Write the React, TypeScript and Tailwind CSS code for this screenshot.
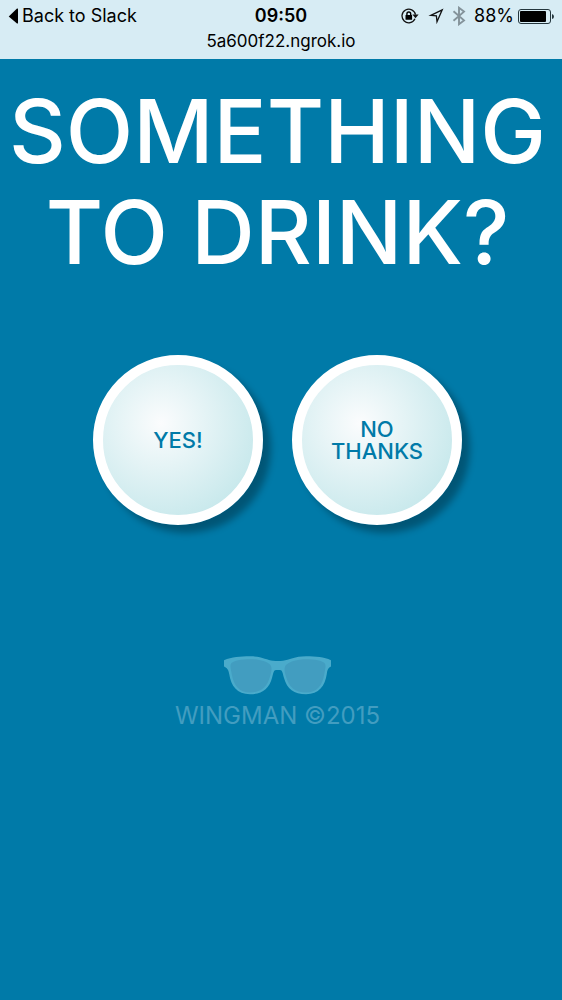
import type { ReactNode } from "react";

function StatusBar() {
  return (
    <header className="bg-[#d7ecf4] font-[Inter,sans-serif] text-black">
      <div className="grid h-[30px] grid-cols-[1fr_auto_1fr] items-center px-2 pt-px">
        <a href="#slack" className="flex items-center gap-1 text-lg leading-[30px]">
          <svg width="10" height="16" viewBox="0 0 10 16" aria-hidden="true">
            <path d="M1 8.2 9 .6q1-.6 1 .7v13.4q0 1.3-1 .7L1 8.8q-.5-.3 0-.6Z" />
          </svg>
          Back to Slack
        </a>
        <time className="text-lg font-semibold leading-[30px]">09:50</time>
        <div className="flex items-center justify-end">
          <RotationLockIcon />
          <LocationIcon />
          <BluetoothIcon />
          <span className="mr-1 text-lg leading-[30px]">88%</span>
          <BatteryIcon />
        </div>
      </div>
      <p className="h-[29px] text-center text-[17px] leading-[22px]">5a600f22.ngrok.io</p>
    </header>
  );
}

function RotationLockIcon() {
  return (
    <svg className="mr-2 shrink-0" width="19" height="16" viewBox="0 0 19 16" fill="none" aria-hidden="true">
      <path d="M14 10.8A6.800 6.800 0 1 1 14.500 6.700" stroke="#111" strokeWidth="1.3" />
      <path d="M11.400 6.600h6.200l-3.100 3.700Z" fill="#111" />
      <rect x="4.500" y="7" width="6.600" height="4.800" rx=".5" fill="#000" />
      <path d="M5.900 7.500V5.900a1.900 1.900 0 0 1 3.800 0v1.600" stroke="#000" strokeWidth="1.4" />
    </svg>
  );
}

function LocationIcon() {
  return (
    <svg className="mr-2 shrink-0" width="16" height="16" viewBox="0 0 16 16" fill="none" aria-hidden="true">
      <path d="M14.200 1.800 2.800 7.400l5.600.5.600 5.800Z" stroke="#111" strokeWidth="1.3" strokeLinejoin="miter" />
    </svg>
  );
}

function BluetoothIcon() {
  return (
    <svg className="mr-2 shrink-0" width="14" height="20" viewBox="0 0 14 20" fill="none" aria-hidden="true">
      <path d="m1.500 5.200 10.500 9.200L7 18.200V1.800l5 3.800L1.500 14.800" stroke="#84939a" strokeWidth="1.900" />
    </svg>
  );
}

function BatteryIcon() {
  return (
    <svg className="shrink-0" width="36" height="15" viewBox="0 0 36 15" fill="none" aria-hidden="true">
      <rect x=".5" y=".5" width="32" height="14" rx="2.5" stroke="#24363d" />
      <rect x="2" y="2" width="26" height="11" rx="1" fill="#000" />
      <path d="M34 5q2 .5 2 2.500t-2 2.500Z" fill="#24363d" />
    </svg>
  );
}

function RoundButton({ children }: { children: ReactNode }) {
  return (
    <button
      type="button"
      className="flex size-[170px] shrink-0 items-center justify-center rounded-full border-10 border-white bg-[radial-gradient(circle_at_40%_40%,#fbfcfd_0%,#b9e3e7_90%)] bg-origin-border px-5 text-center text-[22px] font-medium leading-[22px] text-[#007aa8] shadow-[8px_8px_7px_rgba(0,0,0,0.3)]"
    >
      {children}
    </button>
  );
}

function Sunglasses() {
  return (
    <svg width="108" height="40" viewBox="0 0 108 40" aria-hidden="true">
      <path
        d="M0 4.200C8 1.200 16 .3 26 .3c11 0 17 3.600 23 4.400q5 .6 10 0C65 3.900 71 .3 82 .3c10 0 18 .9 25 3.900v6.300c-2.600 1.200-3.600 3-4.200 7.500C101 30 95 38.200 82 38.200c-12 0-19-5.200-22-16.200-1.400-5-1.600-8-4-8h-4c-2.400 0-2.600 3-4 8C45 33 38 38.200 26 38.200 13 38.200 7 30 5.200 18 4.600 13.500 3 12 0 10.500Z"
        fill="#4aabcb"
      />
      <path
        d="M26 3.200C17 3.200 10 4.500 7.500 7c-2 2.300-.6 6.500.2 11C9.800 29.500 15 36.500 26 36.500c11 0 17.200-5.500 20-16 1.500-5 2.500-9 0-12C42.500 5.500 35 3.200 26 3.200ZM82 3.200c-9 0-16 2.300-19.500 5.300-3 3-2 7-.5 12 2.800 10.500 9 16 20 16s16.500-7 18.300-18.500c.8-4.500 2.200-8.700.2-11C98 4.500 91 3.200 82 3.200Z"
        fill="#429dc0"
      />
    </svg>
  );
}

export default function App() {
  return (
    <div className="min-h-screen overflow-x-hidden bg-[#007aa8] font-[Inter,sans-serif]">
      <StatusBar />
      <main className="flex flex-col items-center pr-[7px] pt-[22px]">
        <h1 className="text-center text-[88px] font-medium leading-[101px] text-white">
          SOMETHING
          <br />
          TO DRINK?
        </h1>
        <div className="mt-[72px] flex gap-[29px]">
          <RoundButton>YES!</RoundButton>
          <RoundButton>NO THANKS</RoundButton>
        </div>
      </main>
      <footer className="mt-[131px] flex flex-col items-center pr-[7px]">
        <Sunglasses />
        <p className="mt-1 text-2xl leading-[32px] text-[#429dc0]">WINGMAN ©2015</p>
      </footer>
    </div>
  );
}
